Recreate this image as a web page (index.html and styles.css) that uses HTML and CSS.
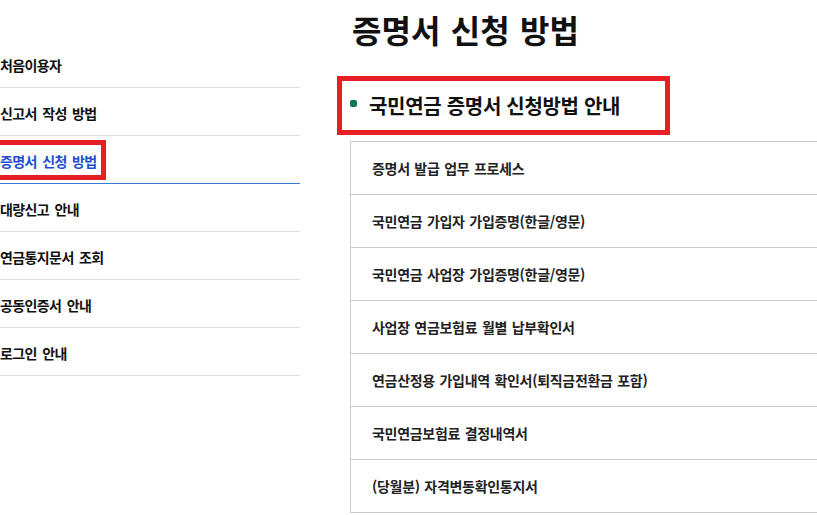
FILE: index.html
```html
<!DOCTYPE html>
<html lang="ko">
<head>
<meta charset="utf-8">
<title>증명서 신청 방법</title>
<link rel="stylesheet" href="styles.css">
</head>
<body>
<div class="page">
  <nav class="side">
    <ul class="side-list">
      <li class="side-item"><a href="#">처음이용자</a></li>
      <li class="side-item"><a href="#">신고서 작성 방법</a></li>
      <li class="side-item active"><a href="#">증명서 신청 방법</a><span class="mark mark-nav"></span></li>
      <li class="side-item"><a href="#">대량신고 안내</a></li>
      <li class="side-item"><a href="#">연금통지문서 조회</a></li>
      <li class="side-item"><a href="#">공동인증서 안내</a></li>
      <li class="side-item"><a href="#">로그인 안내</a></li>
    </ul>
  </nav>
  <main class="content">
    <h1 class="title">증명서 신청 방법</h1>
    <h2 class="subtitle"><span class="dot"></span>국민연금 증명서 신청방법 안내</h2>
    <ul class="doc-list">
      <li class="doc-item">증명서 발급 업무 프로세스</li>
      <li class="doc-item">국민연금 가입자 가입증명(한글/영문)</li>
      <li class="doc-item">국민연금 사업장 가입증명(한글/영문)</li>
      <li class="doc-item">사업장 연금보험료 월별 납부확인서</li>
      <li class="doc-item">연금산정용 가입내역 확인서(퇴직금전환금 포함)</li>
      <li class="doc-item">국민연금보험료 결정내역서</li>
      <li class="doc-item">(당월분) 자격변동확인통지서</li>
    </ul>
  </main>
</div>
</body>
</html>
```

FILE: styles.css
```css
* { box-sizing: border-box; }
html, body {
  margin: 0;
  padding: 0;
  background: #fff;
  overflow: hidden;
}
body {
  font-family: "Noto Sans CJK KR", "Noto Sans", sans-serif;
  color: #111;
  width: 817px;
  height: 515px;
}
.page {
  display: flex;
  align-items: flex-start;
}
.side {
  width: 300px;
  flex: none;
  padding-top: 40px;
}
.side-list {
  list-style: none;
  margin: 0;
  padding: 0;
}
.side-item {
  position: relative;
  height: 48px;
  border-bottom: 1px solid #dedede;
  display: flex;
  align-items: center;
  padding-top: 2px;
}
.side-item a {
  color: #111;
  text-decoration: none;
  font-size: 14px;
  font-weight: 700;
  letter-spacing: -0.6px;
  word-spacing: 2px;
  line-height: 20px;
}
.side-item.active {
  border-bottom: 1px solid #3a78d8;
}
.side-item.active a {
  color: #1d4fcf;
}
.mark {
  position: absolute;
  border: 5px solid #e61e25;
  pointer-events: none;
}
.mark-nav {
  left: -12px;
  width: 118px;
  top: 4px;
  bottom: 3px;
}
.content {
  flex: 1;
  margin-left: 37px;
  min-width: 0;
}
.title {
  margin: 7px 0 0 15px;
  font-size: 32px;
  font-weight: 700;
  line-height: 44px;
  letter-spacing: 0;
  word-spacing: 1.5px;
  color: #111;
  height: 44px;
}
.subtitle {
  margin: 25px 0 0 0;
  width: 333px;
  height: 59px;
  border: 5px solid #e61e25;
  display: flex;
  align-items: center;
  padding-left: 8px;
  font-size: 20px;
  font-weight: 700;
  letter-spacing: -0.3px;
  color: #111;
  gap: 12px;
}
.dot {
  width: 7px;
  height: 7px;
  border-radius: 2px;
  background: #0a7a4c;
  flex: none;
  margin-top: -5px;
}
.doc-list {
  list-style: none;
  margin: 6px 0 0 13px;
  padding: 0;
  border-top: 1px solid #cccccc;
  border-left: 1px solid #cccccc;
}
.doc-item {
  height: 53px;
  border-bottom: 1px solid #cccccc;
  display: flex;
  align-items: center;
  padding-left: 21px;
  font-size: 14px;
  font-weight: 700;
  letter-spacing: -0.3px;
  word-spacing: 1px;
  color: #222;
}
```
